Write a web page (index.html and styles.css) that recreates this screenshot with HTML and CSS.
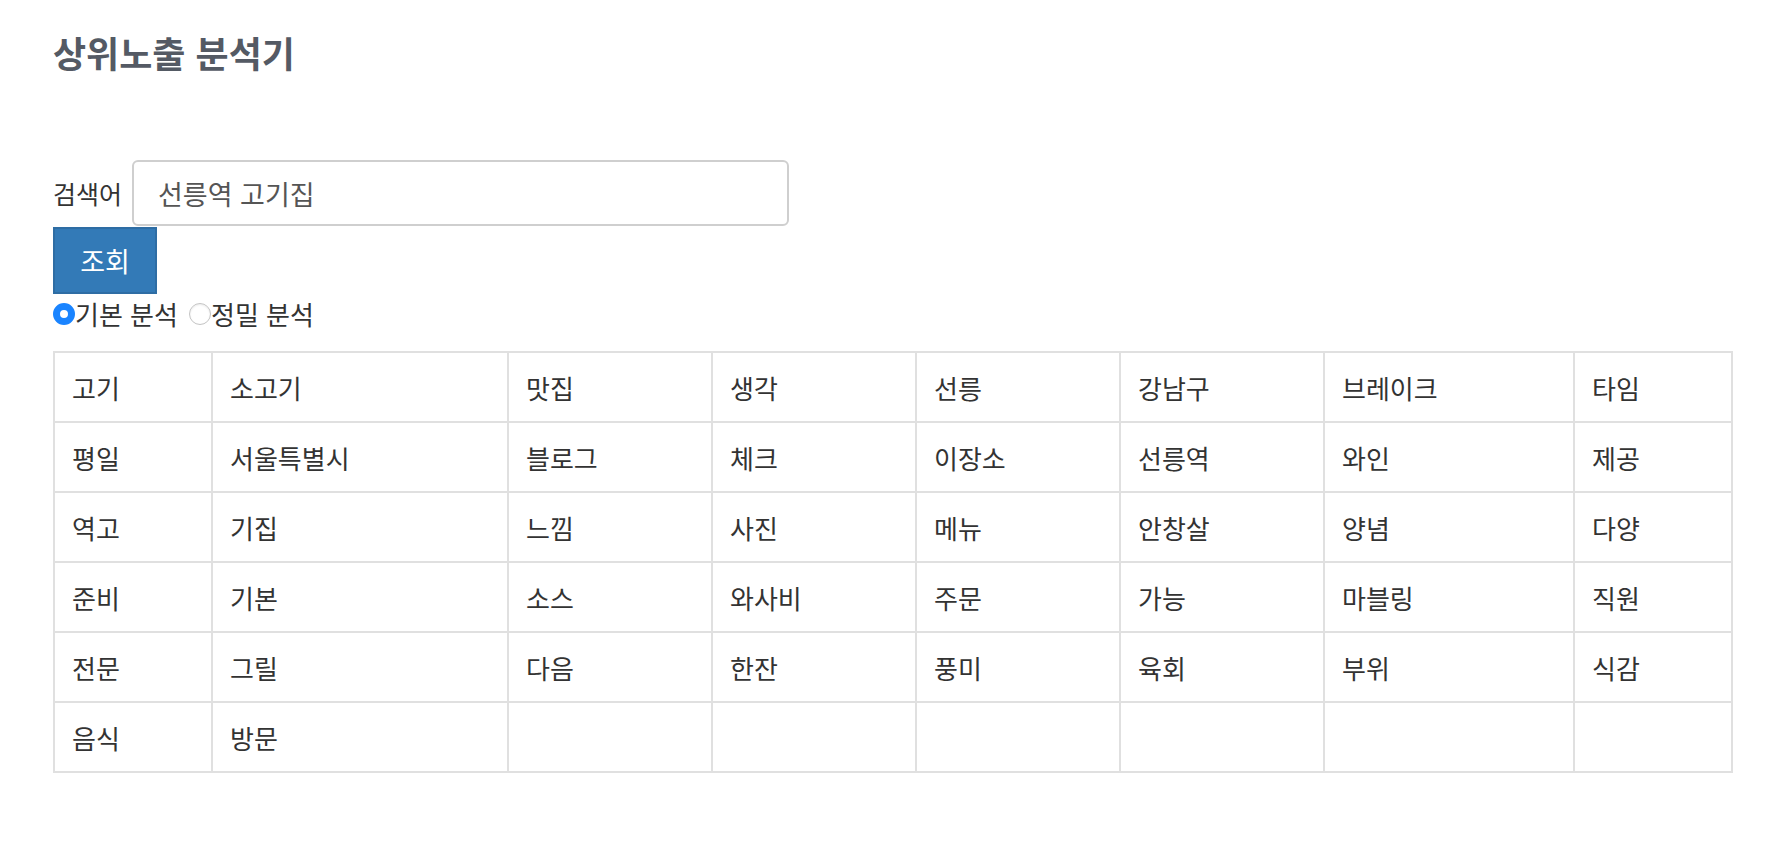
FILE: index.html
```html
<!DOCTYPE html>
<html lang="ko">
<head>
    <meta charset="UTF-8">
    <meta name="viewport" content="width=device-width, initial-scale=1.0">
    <title>상위노출 분석기</title>
    <link rel="stylesheet" href="styles.css">
</head>
<body>
    <div class="main">
        <h2 class="title">상위노출 분석기</h2>

        <div class="search-form">
            <div class="search-row">
                <label for="keyword">검색어</label>
                <input type="text" id="keyword" value="선릉역 고기집">
            </div>
            <button class="btn-search">조회</button>
            <div class="mode">
                <label><input type="radio" name="mode" checked>기본 분석</label>
                <label class="mode-second"><input type="radio" name="mode">정밀 분석</label>
            </div>
        </div>

        <table class="result">
            <colgroup>
                <col class="c-s">
                <col class="c-xl">
                <col class="c-m">
                <col class="c-m">
                <col class="c-m">
                <col class="c-m">
                <col class="c-l">
                <col class="c-s">
            </colgroup>
            <tbody>
                <tr><td>고기</td><td>소고기</td><td>맛집</td><td>생각</td><td>선릉</td><td>강남구</td><td>브레이크</td><td>타임</td></tr>
                <tr><td>평일</td><td>서울특별시</td><td>블로그</td><td>체크</td><td>이장소</td><td>선릉역</td><td>와인</td><td>제공</td></tr>
                <tr><td>역고</td><td>기집</td><td>느낌</td><td>사진</td><td>메뉴</td><td>안창살</td><td>양념</td><td>다양</td></tr>
                <tr><td>준비</td><td>기본</td><td>소스</td><td>와사비</td><td>주문</td><td>가능</td><td>마블링</td><td>직원</td></tr>
                <tr><td>전문</td><td>그릴</td><td>다음</td><td>한잔</td><td>풍미</td><td>육회</td><td>부위</td><td>식감</td></tr>
                <tr><td>음식</td><td>방문</td><td></td><td></td><td></td><td></td><td></td><td></td></tr>
            </tbody>
        </table>
    </div>
</body>
</html>
```

FILE: styles.css
```css
body{
    margin: 0;
    font-family: "Noto Sans CJK KR", "Noto Sans", sans-serif;
    font-size: 26px;
    color: #333;
    background: #fff;
}
.main{
    padding: 0 53px;
}
.title{
    margin: 32px 0 0 0;
    font-size: 36px;
    line-height: 40px;
    font-weight: bold;
    color: #545a64;
}
.search-form{
    margin-top: 88px;
}
.search-row{
    display: flex;
    align-items: center;
    gap: 10px;
}
.search-row label{
    font-size: 25px;
    line-height: 30px;
}
.search-row input{
    width: 657px;
    height: 66px;
    box-sizing: border-box;
    padding: 0 24px;
    border: 2px solid #cfcfcf;
    border-radius: 6px;
    font-family: inherit;
    font-size: 27px;
    color: #555;
    outline: none;
}
.btn-search{
    display: block;
    margin-top: 1px;
    width: 104px;
    height: 67px;
    background-color: #337ab7;
    border: 2px solid #2e6da4;
    color: #fff;
    font-family: inherit;
    font-size: 27px;
    padding: 0;
}
.mode{
    display: flex;
    align-items: center;
    margin-top: 5px;
    line-height: 30px;
}
.mode label{
    display: flex;
    align-items: center;
}
.mode input{
    appearance: none;
    box-sizing: border-box;
    width: 22px;
    height: 22px;
    margin: 0;
    border: 1px solid #c4c4c4;
    border-radius: 50%;
    background: #fff;
    box-shadow: inset 0 1px 2px rgba(0,0,0,0.08);
}
.mode input:checked{
    border: 7px solid #1a84ff;
    box-shadow: none;
}
.mode-second{
    margin-left: 11px;
}
.result{
    margin-top: 22px;
    border-collapse: collapse;
    width: 1680px;
    table-layout: fixed;
}
.result td{
    border: 2px solid #e0e0e0;
    height: 70px;
    padding: 0 17px;
    box-sizing: border-box;
    vertical-align: middle;
}
.c-s{ width: 158px; }
.c-m{ width: 204px; }
.c-l{ width: 250px; }
.c-xl{ width: 296px; }
```
